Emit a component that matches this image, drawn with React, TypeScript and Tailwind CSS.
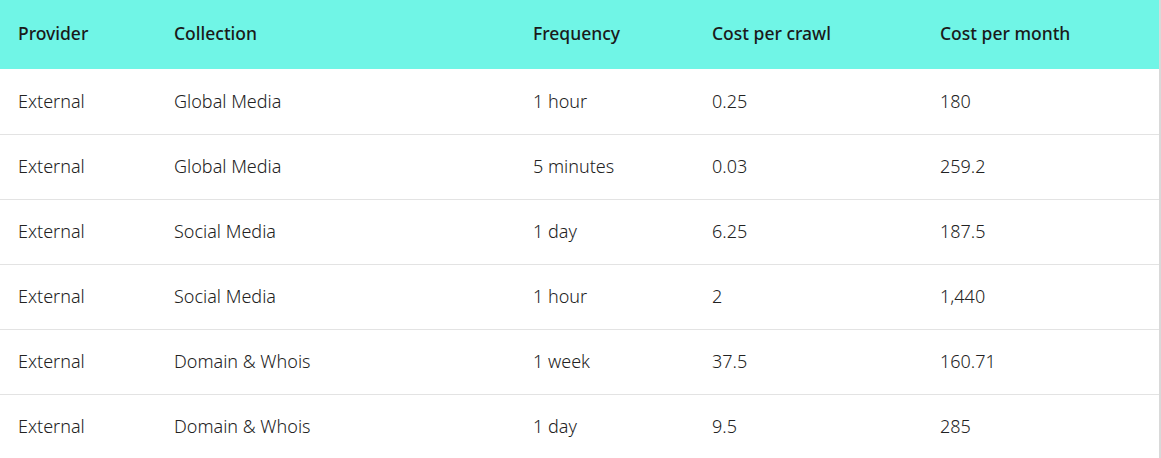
const rows = [
  ["External", "Global Media", "1 hour", "0.25", "180"],
  ["External", "Global Media", "5 minutes", "0.03", "259.2"],
  ["External", "Social Media", "1 day", "6.25", "187.5"],
  ["External", "Social Media", "1 hour", "2", "1,440"],
  ["External", "Domain & Whois", "1 week", "37.5", "160.71"],
  ["External", "Domain & Whois", "1 day", "9.5", "285"],
];

const headers = ["Provider", "Collection", "Frequency", "Cost per crawl", "Cost per month"];
const widths = ["w-[156px]", "w-[359px]", "w-[179px]", "w-[228px]", ""];

export default function App() {
  return (
    <div className="w-[1161px] bg-white font-['Noto_Sans',sans-serif] text-[#222]">
      <div className="border-r-2 border-[#d9d9d9]">
        <table className="w-full border-collapse">
          <thead>
            <tr className="h-[69px] bg-[#70f5e6]">
              {headers.map((h, i) => (
                <th
                  key={h}
                  className={`${widths[i]} pb-[3px] pl-[18px] text-left text-[17.5px] font-medium text-[#1a1a1a]`}
                >
                  {h}
                </th>
              ))}
            </tr>
          </thead>
          <tbody>
            {rows.map((r, i) => (
              <tr key={i} className="h-[65px] border-b border-[#e3e3e3] last:border-b-0">
                {r.map((c, j) => (
                  <td key={j} className="pl-[18px] text-[18px] font-light">
                    {c}
                  </td>
                ))}
              </tr>
            ))}
          </tbody>
        </table>
      </div>
    </div>
  );
}
